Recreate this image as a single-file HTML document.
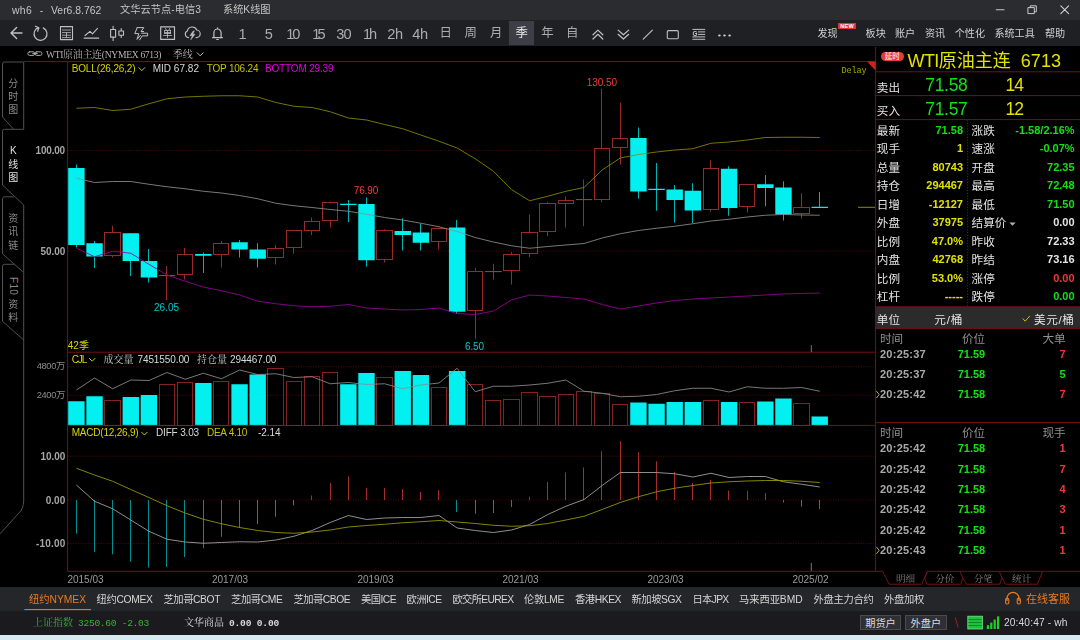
<!DOCTYPE html>
<html lang="zh"><head><meta charset="utf-8"><title>wh6 - WTI原油主连 季线</title>
<style>
html,body{margin:0;padding:0;}
body{width:1080px;height:640px;background:#000;position:relative;overflow:hidden;font-family:"Liberation Sans","Noto Sans CJK SC",sans-serif;}
.t{position:absolute;white-space:nowrap;}
.b{position:absolute;}
svg{position:absolute;left:0;top:0;}
</style></head><body>
<div class="b" style="left:0;top:0;width:1080px;height:20px;background:#2b2c2f;"></div>
<div class="b" style="left:0;top:20px;width:1080px;height:26.4px;background:#1f2024;"></div>
<div class="b" style="left:509.2px;top:21px;width:24.6px;height:23.8px;background:#3c3f47;"></div>
<div class="b" style="left:876.2px;top:307.4px;width:203.8px;height:20.8px;background:#2a2b2a;"></div>
<div class="b" style="left:0;top:586.6px;width:1080px;height:24.6px;background:#25262a;"></div>
<div class="b" style="left:0;top:611.2px;width:1080px;height:23.4px;background:#1b1b1f;"></div>
<div class="b" style="left:0;top:634.5px;width:1080px;height:6px;background:#d7eaf0;"></div>
<div class="t" style="left:880.5px;top:51.7px;width:23.5px;height:9.6px;border-radius:5px;background:#e23c3c;color:#fff;font-size:7.5px;line-height:9.8px;text-align:center;">延时</div>
<div class="t" style="left:838.4px;top:22.8px;width:17.4px;height:6.6px;background:#e03434;color:#fff;font-size:5.5px;line-height:6.8px;text-align:center;font-weight:bold;letter-spacing:0.3px;">NEW</div>
<div class="t" style="left:859.8px;top:614.6px;width:41.4px;height:15.6px;box-sizing:border-box;background:#2f3035;border:1px solid #4a4b51;color:#dcdcdc;font-size:10.2px;line-height:15px;text-align:center;">期货户</div>
<div class="t" style="left:904.6px;top:614.6px;width:42.6px;height:15.6px;box-sizing:border-box;background:#2f3035;border:1px solid #4a4b51;color:#dcdcdc;font-size:10.2px;line-height:15px;text-align:center;">外盘户</div>
<div class="t" style="left:3px;top:277px;width:20px;height:22px;font-size:10px;color:#8a8a8a;writing-mode:vertical-rl;text-orientation:sideways;line-height:20px;letter-spacing:0.3px;">F10</div>
<svg width="1080" height="640" viewBox="0 0 1080 640">
<line x1="68.00" y1="150.30" x2="875.00" y2="150.30" stroke="#4c0707" stroke-width="1" stroke-dasharray="1.2 1.3"/>
<line x1="68.00" y1="251.00" x2="875.00" y2="251.00" stroke="#4c0707" stroke-width="1" stroke-dasharray="1.2 1.3"/>
<line x1="68.00" y1="366.80" x2="875.00" y2="366.80" stroke="#4c0707" stroke-width="1" stroke-dasharray="1.2 1.3"/>
<line x1="68.00" y1="395.20" x2="875.00" y2="395.20" stroke="#4c0707" stroke-width="1" stroke-dasharray="1.2 1.3"/>
<line x1="68.00" y1="456.20" x2="875.00" y2="456.20" stroke="#4c0707" stroke-width="1" stroke-dasharray="1.2 1.3"/>
<line x1="68.00" y1="500.00" x2="875.00" y2="500.00" stroke="#4c0707" stroke-width="1" stroke-dasharray="1.2 1.3"/>
<line x1="68.00" y1="543.40" x2="875.00" y2="543.40" stroke="#4c0707" stroke-width="1" stroke-dasharray="1.2 1.3"/>
<line x1="24.00" y1="61.60" x2="875.50" y2="61.60" stroke="#761212" stroke-width="1" />
<line x1="67.60" y1="61.60" x2="67.60" y2="571.30" stroke="#761212" stroke-width="1" />
<line x1="67.60" y1="352.20" x2="875.50" y2="352.20" stroke="#761212" stroke-width="1" />
<line x1="67.60" y1="425.40" x2="875.50" y2="425.40" stroke="#761212" stroke-width="1" />
<line x1="67.60" y1="571.30" x2="882.50" y2="571.30" stroke="#761212" stroke-width="1" />
<line x1="875.60" y1="47.00" x2="875.60" y2="571.30" stroke="#761212" stroke-width="1" />
<polygon points="867,61.6 875.6,61.6 875.6,70.5" fill="#d02020"/>
<line x1="858.00" y1="207.30" x2="875.00" y2="207.30" stroke="#8c8c00" stroke-width="1" />
<line x1="811.30" y1="345.00" x2="811.30" y2="352.00" stroke="#777" stroke-width="1" />
<line x1="811.30" y1="563.00" x2="811.30" y2="571.00" stroke="#777" stroke-width="1" />
<rect x="68.20" y="401.25" width="16.4" height="23.65" fill="#02f0f0"/>
<rect x="86.33" y="396.25" width="16.4" height="28.65" fill="#02f0f0"/>
<rect x="104.50" y="400.50" width="16.00" height="25.00" fill="none" stroke="#842222" stroke-width="1"/>
<rect x="122.59" y="397.00" width="16.4" height="27.90" fill="#02f0f0"/>
<rect x="140.72" y="395.00" width="16.4" height="29.90" fill="#02f0f0"/>
<rect x="159.50" y="384.50" width="15.00" height="41.00" fill="none" stroke="#842222" stroke-width="1"/>
<rect x="177.50" y="382.50" width="15.00" height="43.00" fill="none" stroke="#842222" stroke-width="1"/>
<rect x="195.11" y="383.00" width="16.4" height="41.90" fill="#02f0f0"/>
<rect x="213.50" y="381.50" width="15.00" height="44.00" fill="none" stroke="#842222" stroke-width="1"/>
<rect x="231.37" y="384.25" width="16.4" height="40.65" fill="#02f0f0"/>
<rect x="249.50" y="374.50" width="16.4" height="50.40" fill="#02f0f0"/>
<rect x="267.50" y="368.50" width="16.00" height="57.00" fill="none" stroke="#842222" stroke-width="1"/>
<rect x="286.50" y="381.50" width="15.00" height="44.00" fill="none" stroke="#842222" stroke-width="1"/>
<rect x="304.50" y="376.50" width="15.00" height="49.00" fill="none" stroke="#842222" stroke-width="1"/>
<rect x="322.50" y="372.50" width="15.00" height="53.00" fill="none" stroke="#842222" stroke-width="1"/>
<rect x="340.15" y="384.25" width="16.4" height="40.65" fill="#02f0f0"/>
<rect x="358.28" y="373.00" width="16.4" height="51.90" fill="#02f0f0"/>
<rect x="376.50" y="377.50" width="16.00" height="48.00" fill="none" stroke="#842222" stroke-width="1"/>
<rect x="394.54" y="371.00" width="16.4" height="53.90" fill="#02f0f0"/>
<rect x="412.67" y="375.00" width="16.4" height="49.90" fill="#02f0f0"/>
<rect x="431.50" y="387.50" width="15.00" height="38.00" fill="none" stroke="#842222" stroke-width="1"/>
<rect x="448.93" y="371.00" width="16.4" height="53.90" fill="#02f0f0"/>
<rect x="467.50" y="384.50" width="15.00" height="41.00" fill="none" stroke="#842222" stroke-width="1"/>
<rect x="485.50" y="400.50" width="15.00" height="25.00" fill="none" stroke="#842222" stroke-width="1"/>
<rect x="503.50" y="399.50" width="16.00" height="26.00" fill="none" stroke="#842222" stroke-width="1"/>
<rect x="521.50" y="392.50" width="16.00" height="33.00" fill="none" stroke="#842222" stroke-width="1"/>
<rect x="539.50" y="396.50" width="16.00" height="29.00" fill="none" stroke="#842222" stroke-width="1"/>
<rect x="558.50" y="394.50" width="15.00" height="31.00" fill="none" stroke="#842222" stroke-width="1"/>
<rect x="576.50" y="391.50" width="15.00" height="34.00" fill="none" stroke="#842222" stroke-width="1"/>
<rect x="594.50" y="393.50" width="15.00" height="32.00" fill="none" stroke="#842222" stroke-width="1"/>
<rect x="612.50" y="404.50" width="15.00" height="21.00" fill="none" stroke="#842222" stroke-width="1"/>
<rect x="630.23" y="402.50" width="16.4" height="22.40" fill="#02f0f0"/>
<rect x="648.36" y="403.75" width="16.4" height="21.15" fill="#02f0f0"/>
<rect x="666.49" y="402.00" width="16.4" height="22.90" fill="#02f0f0"/>
<rect x="684.62" y="402.00" width="16.4" height="22.90" fill="#02f0f0"/>
<rect x="703.50" y="400.50" width="15.00" height="25.00" fill="none" stroke="#842222" stroke-width="1"/>
<rect x="720.88" y="402.00" width="16.4" height="22.90" fill="#02f0f0"/>
<rect x="739.50" y="402.50" width="15.00" height="23.00" fill="none" stroke="#842222" stroke-width="1"/>
<rect x="757.14" y="401.50" width="16.4" height="23.40" fill="#02f0f0"/>
<rect x="775.27" y="398.50" width="16.4" height="26.40" fill="#02f0f0"/>
<rect x="793.50" y="403.50" width="16.00" height="22.00" fill="none" stroke="#842222" stroke-width="1"/>
<rect x="811.53" y="416.50" width="16.4" height="8.40" fill="#02f0f0"/>
<polyline points="76.40,390.00 94.53,378.00 112.66,388.75 130.79,380.00 148.92,380.50 167.05,372.50 185.18,379.25 203.31,373.25 221.44,378.75 239.57,370.00 257.70,374.50 275.83,373.75 293.96,377.50 312.09,376.75 330.22,383.75 348.35,382.50 366.48,384.50 384.61,383.75 402.74,388.75 420.87,385.00 439.00,383.00 457.13,368.25 475.26,391.75 493.39,386.25 511.52,386.25 529.65,385.00 547.78,383.25 565.91,380.00 584.04,391.25 602.17,393.25 620.30,396.75 638.43,396.25 656.56,394.50 674.69,390.75 692.82,388.25 710.95,388.25 729.08,392.00 747.21,386.75 765.34,388.25 783.47,388.25 801.60,387.50 819.73,391.25" fill="none" stroke="#8c8c8c" stroke-width="0.85" stroke-linejoin="round"/>
<line x1="76.50" y1="164.50" x2="76.50" y2="247.50" stroke="#00b4b4" stroke-width="1" />
<rect x="68.20" y="168.00" width="16.4" height="77.00" fill="#02f0f0"/>
<line x1="94.50" y1="241.00" x2="94.50" y2="268.00" stroke="#00b4b4" stroke-width="1" />
<rect x="86.33" y="243.25" width="16.4" height="13.25" fill="#02f0f0"/>
<line x1="112.50" y1="225.75" x2="112.50" y2="232.50" stroke="#9a2a28" stroke-width="1" />
<line x1="112.50" y1="255.50" x2="112.50" y2="257.50" stroke="#9a2a28" stroke-width="1" />
<rect x="104.50" y="232.50" width="16.00" height="23.00" fill="none" stroke="#9a2a28" stroke-width="1"/>
<line x1="130.50" y1="233.25" x2="130.50" y2="276.00" stroke="#00b4b4" stroke-width="1" />
<rect x="122.59" y="233.25" width="16.4" height="27.75" fill="#02f0f0"/>
<line x1="148.50" y1="249.00" x2="148.50" y2="282.50" stroke="#00b4b4" stroke-width="1" />
<rect x="140.72" y="261.00" width="16.4" height="16.50" fill="#02f0f0"/>
<line x1="166.50" y1="266.00" x2="166.50" y2="300.00" stroke="#9a2a28" stroke-width="1" />
<rect x="158.85" y="275.00" width="16.4" height="1.1" fill="#c03030"/>
<line x1="184.50" y1="248.00" x2="184.50" y2="254.50" stroke="#9a2a28" stroke-width="1" />
<line x1="184.50" y1="274.50" x2="184.50" y2="279.50" stroke="#9a2a28" stroke-width="1" />
<rect x="177.50" y="254.50" width="15.00" height="20.00" fill="none" stroke="#9a2a28" stroke-width="1"/>
<line x1="203.50" y1="252.50" x2="203.50" y2="273.00" stroke="#00b4b4" stroke-width="1" />
<rect x="195.11" y="254.00" width="16.4" height="1.75" fill="#02f0f0"/>
<line x1="221.50" y1="241.00" x2="221.50" y2="243.50" stroke="#9a2a28" stroke-width="1" />
<line x1="221.50" y1="254.50" x2="221.50" y2="267.50" stroke="#9a2a28" stroke-width="1" />
<rect x="213.50" y="243.50" width="15.00" height="11.00" fill="none" stroke="#9a2a28" stroke-width="1"/>
<line x1="239.50" y1="240.00" x2="239.50" y2="257.50" stroke="#00b4b4" stroke-width="1" />
<rect x="231.37" y="242.25" width="16.4" height="7.25" fill="#02f0f0"/>
<line x1="257.50" y1="243.25" x2="257.50" y2="267.50" stroke="#00b4b4" stroke-width="1" />
<rect x="249.50" y="249.50" width="16.4" height="9.25" fill="#02f0f0"/>
<line x1="275.50" y1="245.00" x2="275.50" y2="248.50" stroke="#9a2a28" stroke-width="1" />
<line x1="275.50" y1="257.50" x2="275.50" y2="264.50" stroke="#9a2a28" stroke-width="1" />
<rect x="267.50" y="248.50" width="16.00" height="9.00" fill="none" stroke="#9a2a28" stroke-width="1"/>
<line x1="293.50" y1="230.00" x2="293.50" y2="230.50" stroke="#9a2a28" stroke-width="1" />
<line x1="293.50" y1="247.50" x2="293.50" y2="253.75" stroke="#9a2a28" stroke-width="1" />
<rect x="286.50" y="230.50" width="15.00" height="17.00" fill="none" stroke="#9a2a28" stroke-width="1"/>
<line x1="311.50" y1="217.50" x2="311.50" y2="221.50" stroke="#9a2a28" stroke-width="1" />
<line x1="311.50" y1="230.50" x2="311.50" y2="235.00" stroke="#9a2a28" stroke-width="1" />
<rect x="304.50" y="221.50" width="15.00" height="9.00" fill="none" stroke="#9a2a28" stroke-width="1"/>
<line x1="330.50" y1="201.50" x2="330.50" y2="202.50" stroke="#9a2a28" stroke-width="1" />
<line x1="330.50" y1="220.50" x2="330.50" y2="227.50" stroke="#9a2a28" stroke-width="1" />
<rect x="322.50" y="202.50" width="15.00" height="18.00" fill="none" stroke="#9a2a28" stroke-width="1"/>
<line x1="348.50" y1="200.00" x2="348.50" y2="222.00" stroke="#00b4b4" stroke-width="1" />
<rect x="340.15" y="203.75" width="16.4" height="1.20" fill="#02f0f0"/>
<line x1="366.50" y1="197.50" x2="366.50" y2="266.75" stroke="#00b4b4" stroke-width="1" />
<rect x="358.28" y="204.00" width="16.4" height="56.25" fill="#02f0f0"/>
<line x1="384.50" y1="229.25" x2="384.50" y2="230.50" stroke="#9a2a28" stroke-width="1" />
<line x1="384.50" y1="259.50" x2="384.50" y2="262.50" stroke="#9a2a28" stroke-width="1" />
<rect x="376.50" y="230.50" width="16.00" height="29.00" fill="none" stroke="#9a2a28" stroke-width="1"/>
<line x1="402.50" y1="218.25" x2="402.50" y2="250.50" stroke="#00b4b4" stroke-width="1" />
<rect x="394.54" y="231.00" width="16.4" height="4.00" fill="#02f0f0"/>
<line x1="420.50" y1="223.75" x2="420.50" y2="250.50" stroke="#00b4b4" stroke-width="1" />
<rect x="412.67" y="232.50" width="16.4" height="10.25" fill="#02f0f0"/>
<line x1="438.50" y1="227.50" x2="438.50" y2="228.50" stroke="#9a2a28" stroke-width="1" />
<line x1="438.50" y1="241.50" x2="438.50" y2="249.50" stroke="#9a2a28" stroke-width="1" />
<rect x="431.50" y="228.50" width="15.00" height="13.00" fill="none" stroke="#9a2a28" stroke-width="1"/>
<line x1="456.50" y1="220.00" x2="456.50" y2="313.75" stroke="#00b4b4" stroke-width="1" />
<rect x="448.93" y="227.50" width="16.4" height="84.25" fill="#02f0f0"/>
<line x1="475.50" y1="268.00" x2="475.50" y2="271.50" stroke="#9a2a28" stroke-width="1" />
<line x1="475.50" y1="310.50" x2="475.50" y2="338.75" stroke="#9a2a28" stroke-width="1" />
<rect x="467.50" y="271.50" width="15.00" height="39.00" fill="none" stroke="#9a2a28" stroke-width="1"/>
<line x1="493.50" y1="263.75" x2="493.50" y2="279.50" stroke="#9a2a28" stroke-width="1" />
<rect x="485.19" y="271.00" width="16.4" height="1.1" fill="#c03030"/>
<line x1="511.50" y1="252.00" x2="511.50" y2="254.50" stroke="#9a2a28" stroke-width="1" />
<line x1="511.50" y1="270.50" x2="511.50" y2="284.50" stroke="#9a2a28" stroke-width="1" />
<rect x="503.50" y="254.50" width="16.00" height="16.00" fill="none" stroke="#9a2a28" stroke-width="1"/>
<line x1="529.50" y1="214.50" x2="529.50" y2="232.50" stroke="#9a2a28" stroke-width="1" />
<line x1="529.50" y1="253.50" x2="529.50" y2="257.00" stroke="#9a2a28" stroke-width="1" />
<rect x="521.50" y="232.50" width="16.00" height="21.00" fill="none" stroke="#9a2a28" stroke-width="1"/>
<line x1="547.50" y1="202.00" x2="547.50" y2="203.50" stroke="#9a2a28" stroke-width="1" />
<line x1="547.50" y1="231.50" x2="547.50" y2="236.25" stroke="#9a2a28" stroke-width="1" />
<rect x="539.50" y="203.50" width="16.00" height="28.00" fill="none" stroke="#9a2a28" stroke-width="1"/>
<line x1="565.50" y1="196.50" x2="565.50" y2="200.50" stroke="#9a2a28" stroke-width="1" />
<line x1="565.50" y1="203.50" x2="565.50" y2="227.50" stroke="#9a2a28" stroke-width="1" />
<rect x="558.50" y="200.50" width="15.00" height="3.00" fill="none" stroke="#9a2a28" stroke-width="1"/>
<line x1="583.50" y1="179.50" x2="583.50" y2="226.25" stroke="#9a2a28" stroke-width="1" />
<rect x="575.84" y="199.00" width="16.4" height="1.1" fill="#c03030"/>
<line x1="601.50" y1="88.75" x2="601.50" y2="148.50" stroke="#9a2a28" stroke-width="1" />
<line x1="601.50" y1="199.50" x2="601.50" y2="202.00" stroke="#9a2a28" stroke-width="1" />
<rect x="594.50" y="148.50" width="15.00" height="51.00" fill="none" stroke="#9a2a28" stroke-width="1"/>
<line x1="620.50" y1="102.50" x2="620.50" y2="138.50" stroke="#9a2a28" stroke-width="1" />
<line x1="620.50" y1="147.50" x2="620.50" y2="164.50" stroke="#9a2a28" stroke-width="1" />
<rect x="612.50" y="138.50" width="15.00" height="9.00" fill="none" stroke="#9a2a28" stroke-width="1"/>
<line x1="638.50" y1="127.50" x2="638.50" y2="198.75" stroke="#00b4b4" stroke-width="1" />
<rect x="630.23" y="138.00" width="16.4" height="53.50" fill="#02f0f0"/>
<line x1="656.50" y1="163.00" x2="656.50" y2="210.75" stroke="#00b4b4" stroke-width="1" />
<rect x="648.36" y="188.75" width="16.4" height="1.25" fill="#02f0f0"/>
<line x1="674.50" y1="185.00" x2="674.50" y2="222.50" stroke="#00b4b4" stroke-width="1" />
<rect x="666.49" y="189.50" width="16.4" height="10.50" fill="#02f0f0"/>
<line x1="692.50" y1="183.25" x2="692.50" y2="223.00" stroke="#00b4b4" stroke-width="1" />
<rect x="684.62" y="190.75" width="16.4" height="19.75" fill="#02f0f0"/>
<line x1="710.50" y1="160.50" x2="710.50" y2="168.50" stroke="#9a2a28" stroke-width="1" />
<line x1="710.50" y1="209.50" x2="710.50" y2="211.50" stroke="#9a2a28" stroke-width="1" />
<rect x="703.50" y="168.50" width="15.00" height="41.00" fill="none" stroke="#9a2a28" stroke-width="1"/>
<line x1="728.50" y1="166.25" x2="728.50" y2="215.75" stroke="#00b4b4" stroke-width="1" />
<rect x="720.88" y="168.75" width="16.4" height="39.25" fill="#02f0f0"/>
<line x1="747.50" y1="184.00" x2="747.50" y2="184.50" stroke="#9a2a28" stroke-width="1" />
<line x1="747.50" y1="206.50" x2="747.50" y2="212.50" stroke="#9a2a28" stroke-width="1" />
<rect x="739.50" y="184.50" width="15.00" height="22.00" fill="none" stroke="#9a2a28" stroke-width="1"/>
<line x1="765.50" y1="175.00" x2="765.50" y2="206.25" stroke="#00b4b4" stroke-width="1" />
<rect x="757.14" y="184.25" width="16.4" height="3.75" fill="#02f0f0"/>
<line x1="783.50" y1="181.25" x2="783.50" y2="220.50" stroke="#00b4b4" stroke-width="1" />
<rect x="775.27" y="187.50" width="16.4" height="27.00" fill="#02f0f0"/>
<line x1="801.50" y1="193.25" x2="801.50" y2="207.50" stroke="#9a2a28" stroke-width="1" />
<line x1="801.50" y1="213.50" x2="801.50" y2="218.50" stroke="#9a2a28" stroke-width="1" />
<rect x="793.50" y="207.50" width="16.00" height="6.00" fill="none" stroke="#9a2a28" stroke-width="1"/>
<line x1="819.50" y1="192.00" x2="819.50" y2="208.00" stroke="#00b4b4" stroke-width="1" />
<rect x="811.53" y="206.75" width="16.4" height="1.25" fill="#02f0f0"/>
<polyline points="76.40,108.25 94.53,107.50 112.66,110.50 130.79,109.25 148.92,103.75 167.05,98.75 185.18,97.00 203.31,96.25 221.44,95.75 239.57,95.75 257.70,97.00 275.83,102.50 293.96,106.25 312.09,107.50 330.22,111.75 348.35,118.00 366.48,120.00 384.61,124.50 402.74,128.75 420.87,135.00 439.00,141.25 457.13,148.00 475.26,158.75 493.39,171.25 511.52,189.50 529.65,200.75 547.78,196.25 565.91,191.25 584.04,187.50 602.17,170.00 620.30,158.00 638.43,154.50 656.56,152.00 674.69,150.00 692.82,148.75 710.95,143.25 729.08,142.00 747.21,140.00 765.34,137.50 783.47,137.25 801.60,137.25 819.73,137.50" fill="none" stroke="#8a8a00" stroke-width="0.85" stroke-linejoin="round"/>
<polyline points="76.40,178.25 94.53,182.50 112.66,181.50 130.79,181.50 148.92,184.25 167.05,186.75 185.18,188.75 203.31,191.25 221.44,193.00 239.57,195.50 257.70,198.75 275.83,203.25 293.96,205.75 312.09,207.50 330.22,209.50 348.35,211.25 366.48,214.25 384.61,217.50 402.74,220.00 420.87,223.25 439.00,226.75 457.13,231.50 475.26,237.50 493.39,242.00 511.52,245.75 529.65,248.25 547.78,246.50 565.91,245.00 584.04,243.50 602.17,238.00 620.30,233.75 638.43,230.50 656.56,228.25 674.69,226.25 692.82,223.75 710.95,221.00 729.08,219.25 747.21,217.00 765.34,215.25 783.47,214.50 801.60,215.00 819.73,215.25" fill="none" stroke="#8e8e8e" stroke-width="0.85" stroke-linejoin="round"/>
<polyline points="76.40,248.00 94.53,256.75 112.66,251.25 130.79,253.25 148.92,264.25 167.05,275.00 185.18,281.25 203.31,287.00 221.44,290.75 239.57,295.00 257.70,301.25 275.83,303.75 293.96,305.75 312.09,306.75 330.22,306.25 348.35,304.50 366.48,308.00 384.61,309.00 402.74,310.00 420.87,309.50 439.00,308.00 457.13,313.50 475.26,314.50 493.39,311.00 511.52,300.00 529.65,295.00 547.78,296.00 565.91,297.50 584.04,299.00 602.17,304.50 620.30,309.00 638.43,306.00 656.56,303.00 674.69,300.50 692.82,299.00 710.95,298.00 729.08,297.00 747.21,296.00 765.34,295.00 783.47,294.00 801.60,293.50 819.73,293.00" fill="none" stroke="#98009a" stroke-width="0.85" stroke-linejoin="round"/>
<line x1="76.50" y1="500.00" x2="76.50" y2="533.75" stroke="#008e8e" stroke-width="1" />
<line x1="94.50" y1="500.00" x2="94.50" y2="552.00" stroke="#008e8e" stroke-width="1" />
<line x1="112.50" y1="500.00" x2="112.50" y2="554.25" stroke="#008e8e" stroke-width="1" />
<line x1="130.50" y1="500.00" x2="130.50" y2="561.75" stroke="#008e8e" stroke-width="1" />
<line x1="148.50" y1="500.00" x2="148.50" y2="567.50" stroke="#008e8e" stroke-width="1" />
<line x1="166.50" y1="500.00" x2="166.50" y2="567.00" stroke="#008e8e" stroke-width="1" />
<line x1="184.50" y1="500.00" x2="184.50" y2="557.00" stroke="#008e8e" stroke-width="1" />
<line x1="203.50" y1="500.00" x2="203.50" y2="548.25" stroke="#008e8e" stroke-width="1" />
<line x1="221.50" y1="500.00" x2="221.50" y2="536.75" stroke="#008e8e" stroke-width="1" />
<line x1="239.50" y1="500.00" x2="239.50" y2="528.00" stroke="#008e8e" stroke-width="1" />
<line x1="257.50" y1="500.00" x2="257.50" y2="524.25" stroke="#008e8e" stroke-width="1" />
<line x1="275.50" y1="500.00" x2="275.50" y2="516.75" stroke="#008e8e" stroke-width="1" />
<line x1="293.50" y1="500.00" x2="293.50" y2="505.50" stroke="#008e8e" stroke-width="1" />
<line x1="311.50" y1="500.00" x2="311.50" y2="495.50" stroke="#a82c2c" stroke-width="1" />
<line x1="330.50" y1="500.00" x2="330.50" y2="483.25" stroke="#a82c2c" stroke-width="1" />
<line x1="348.50" y1="500.00" x2="348.50" y2="476.50" stroke="#a82c2c" stroke-width="1" />
<line x1="366.50" y1="500.00" x2="366.50" y2="488.25" stroke="#a82c2c" stroke-width="1" />
<line x1="384.50" y1="500.00" x2="384.50" y2="488.00" stroke="#a82c2c" stroke-width="1" />
<line x1="402.50" y1="500.00" x2="402.50" y2="489.00" stroke="#a82c2c" stroke-width="1" />
<line x1="420.50" y1="500.00" x2="420.50" y2="492.00" stroke="#a82c2c" stroke-width="1" />
<line x1="438.50" y1="500.00" x2="438.50" y2="490.00" stroke="#a82c2c" stroke-width="1" />
<line x1="456.50" y1="500.00" x2="456.50" y2="512.00" stroke="#008e8e" stroke-width="1" />
<line x1="475.50" y1="500.00" x2="475.50" y2="513.75" stroke="#008e8e" stroke-width="1" />
<line x1="493.50" y1="500.00" x2="493.50" y2="513.00" stroke="#008e8e" stroke-width="1" />
<line x1="511.50" y1="500.00" x2="511.50" y2="507.00" stroke="#008e8e" stroke-width="1" />
<line x1="529.50" y1="500.00" x2="529.50" y2="496.75" stroke="#a82c2c" stroke-width="1" />
<line x1="547.50" y1="500.00" x2="547.50" y2="482.00" stroke="#a82c2c" stroke-width="1" />
<line x1="565.50" y1="500.00" x2="565.50" y2="472.50" stroke="#a82c2c" stroke-width="1" />
<line x1="583.50" y1="500.00" x2="583.50" y2="467.50" stroke="#a82c2c" stroke-width="1" />
<line x1="601.50" y1="500.00" x2="601.50" y2="451.25" stroke="#a82c2c" stroke-width="1" />
<line x1="620.50" y1="500.00" x2="620.50" y2="441.25" stroke="#a82c2c" stroke-width="1" />
<line x1="638.50" y1="500.00" x2="638.50" y2="452.00" stroke="#a82c2c" stroke-width="1" />
<line x1="656.50" y1="500.00" x2="656.50" y2="461.25" stroke="#a82c2c" stroke-width="1" />
<line x1="674.50" y1="500.00" x2="674.50" y2="472.00" stroke="#a82c2c" stroke-width="1" />
<line x1="692.50" y1="500.00" x2="692.50" y2="483.00" stroke="#a82c2c" stroke-width="1" />
<line x1="710.50" y1="500.00" x2="710.50" y2="480.00" stroke="#a82c2c" stroke-width="1" />
<line x1="728.50" y1="500.00" x2="728.50" y2="490.50" stroke="#a82c2c" stroke-width="1" />
<line x1="747.50" y1="500.00" x2="747.50" y2="490.75" stroke="#a82c2c" stroke-width="1" />
<line x1="765.50" y1="500.00" x2="765.50" y2="493.00" stroke="#a82c2c" stroke-width="1" />
<line x1="783.50" y1="500.00" x2="783.50" y2="502.50" stroke="#008e8e" stroke-width="1" />
<line x1="801.50" y1="500.00" x2="801.50" y2="506.75" stroke="#008e8e" stroke-width="1" />
<line x1="819.50" y1="500.00" x2="819.50" y2="509.00" stroke="#008e8e" stroke-width="1" />
<polyline points="76.40,485.00 94.53,501.25 112.66,508.75 130.79,520.00 148.92,531.25 167.05,539.25 185.18,542.00 203.31,543.25 221.44,542.50 239.57,541.75 257.70,542.00 275.83,540.00 293.96,536.25 312.09,530.50 330.22,522.50 348.35,515.50 366.48,519.50 384.61,518.00 402.74,517.50 420.87,517.50 439.00,515.50 457.13,528.00 475.26,530.50 493.39,532.50 511.52,530.00 529.65,524.50 547.78,514.50 565.91,506.25 584.04,499.50 602.17,485.50 620.30,472.50 638.43,472.50 656.56,472.50 674.69,473.75 692.82,477.00 710.95,473.25 729.08,477.50 747.21,476.50 765.34,476.50 783.47,481.75 801.60,484.25 819.73,487.00" fill="none" stroke="#a8a8a8" stroke-width="0.85" stroke-linejoin="round"/>
<polyline points="76.40,468.25 94.53,475.00 112.66,481.25 130.79,489.50 148.92,497.50 167.05,505.75 185.18,513.00 203.31,519.25 221.44,523.75 239.57,527.50 257.70,530.50 275.83,532.50 293.96,533.25 312.09,532.00 330.22,530.00 348.35,527.00 366.48,525.50 384.61,524.25 402.74,522.75 420.87,521.75 439.00,520.50 457.13,522.00 475.26,523.50 493.39,525.25 511.52,526.25 529.65,525.75 547.78,523.50 565.91,520.00 584.04,516.25 602.17,509.50 620.30,502.50 638.43,496.75 656.56,491.75 674.69,488.25 692.82,485.50 710.95,483.00 729.08,481.75 747.21,481.00 765.34,480.50 783.47,480.50 801.60,481.25 819.73,482.50" fill="none" stroke="#9c9c00" stroke-width="0.85" stroke-linejoin="round"/>
<path d="M23.7,129.3 L23.7,62 L4.5,62 Q2.5,62 2.5,64 L2.5,117 L13.7,129.3 L23.7,129.3" fill="none" stroke="#505050" stroke-width="1" stroke-linejoin="round"/>
<path d="M13.7,129.3 L4.5,129.3 Q2.5,129.3 2.5,131.3 L2.5,185 L23.7,205" fill="none" stroke="#505050" stroke-width="1" stroke-linejoin="round"/>
<path d="M13.7,196.8 L4.5,196.8 Q2.5,196.8 2.5,198.8 L2.5,253.8 L23.7,272.5 L23.7,205" fill="none" stroke="#505050" stroke-width="1" stroke-linejoin="round"/>
<path d="M13.7,264.3 L4.5,264.3 Q2.5,264.3 2.5,266.3 L2.5,321.3 L23.7,340 L23.7,272.5" fill="none" stroke="#505050" stroke-width="1" stroke-linejoin="round"/>
<path d="M23.7,340 L23.7,501 Q23.7,508.5 18.5,513.5 L0,533.8" fill="none" stroke="#505050" stroke-width="1" stroke-linejoin="round"/>
<line x1="875.60" y1="71.80" x2="1080.00" y2="71.80" stroke="#761212" stroke-width="1" />
<line x1="875.60" y1="95.60" x2="1080.00" y2="95.60" stroke="#761212" stroke-width="1" />
<line x1="875.60" y1="119.60" x2="1080.00" y2="119.60" stroke="#761212" stroke-width="1" />
<line x1="875.60" y1="306.80" x2="1080.00" y2="306.80" stroke="#761212" stroke-width="1" />
<line x1="875.60" y1="328.60" x2="1080.00" y2="328.60" stroke="#761212" stroke-width="1" />
<line x1="875.60" y1="422.60" x2="1080.00" y2="422.60" stroke="#761212" stroke-width="1" />
<line x1="967.60" y1="120.00" x2="967.60" y2="306.80" stroke="#7a1414" stroke-width="1" stroke-dasharray="1.2 1.6"/>
<path d="M882.5,571.3 L889.2,584.2 L921.7,584.2 L927.5,571.3 L1080,571.3" fill="none" stroke="#761212" stroke-width="1" stroke-linejoin="round"/>
<path d="M927.5,571.3 L924.8,577.8 L926.8,584.2 L960.8,584.2 L962.8,577.8 L960,571.3" fill="none" stroke="#761212" stroke-width="1" stroke-linejoin="round"/>
<path d="M962.8,577.8 L966.3,584.2 L999.7,584.2 L1002,577.8 L999.2,571.3" fill="none" stroke="#761212" stroke-width="1" stroke-linejoin="round"/>
<path d="M1002,577.8 L1005.3,584.2 L1037.5,584.2 L1042.5,571.3" fill="none" stroke="#761212" stroke-width="1" stroke-linejoin="round"/>
<path d="M996.3,9.7 L1004,9.7" fill="none" stroke="#c8c8c8" stroke-width="1.1" stroke-linecap="round" stroke-linejoin="round" />
<path d="M1028.3,7.6 h6 v6 h-6 z M1030.3,7.6 v-1.8 h6 v6 h-1.8" fill="none" stroke="#c8c8c8" stroke-width="1" stroke-linecap="round" stroke-linejoin="round" />
<path d="M1060.8,5.9 l7.8,7.8 M1068.6,5.9 l-7.8,7.8" fill="none" stroke="#d0d0d0" stroke-width="1.1" stroke-linecap="round" stroke-linejoin="round" />
<path d="M11,33 L22,33 M16.6,27.4 L11,33 L16.6,38.6" fill="none" stroke="#c0c0c0" stroke-width="1.4" stroke-linecap="round" stroke-linejoin="round" />
<path d="M38.6,27.6 A6.5,6.5 0 1 0 43.2,27.9 M35.4,26.2 L38.9,27.7 L37.6,31.2" fill="none" stroke="#c0c0c0" stroke-width="1.2" stroke-linecap="round" stroke-linejoin="round" />
<path d="M60.5,26.6 h12 v13 h-12 z" fill="none" stroke="#c0c0c0" stroke-width="1.1" stroke-linecap="round" stroke-linejoin="round" />
<path d="M62.4,30 h8.2 M62.4,32.6 h8.2 M62.4,35.2 h8.2 M62.4,37.6 h8.2 M66.5,32.6 v5" fill="none" stroke="#c0c0c0" stroke-width="0.8" stroke-linecap="round" stroke-linejoin="round" />
<path d="M85,35.5 L90,31.4 L92.5,33.8 L97.5,28.4" fill="none" stroke="#c0c0c0" stroke-width="1.1" stroke-linecap="round" stroke-linejoin="round" />
<path d="M84.2,38.2 L98.6,38.2" fill="none" stroke="#c0c0c0" stroke-width="1.3" stroke-linecap="round" stroke-linejoin="round" />
<path d="M110.6,29.5 h5 v7.6 h-5 z M113.1,26.2 v3.3 M113.1,37.1 v3.4" fill="none" stroke="#c0c0c0" stroke-width="1.1" stroke-linecap="round" stroke-linejoin="round" />
<path d="M118.9,31 h4.6 v4.2 h-4.6 z M121.2,28.6 v2.4 M121.2,35.2 v2.2" fill="none" stroke="#c0c0c0" stroke-width="1.1" stroke-linecap="round" stroke-linejoin="round" />
<path d="M137.2,27.6 h6.6 l-2.8,3.9 h2.6 M137.2,27.6 l-2.4,6 h4 l-1.8,5.8 l3.4,-4" fill="none" stroke="#c0c0c0" stroke-width="1" stroke-linecap="round" stroke-linejoin="round" />
<path d="M141.6,33.2 h6 v2.7 h-5.4 l-2.6,4" fill="none" stroke="#c0c0c0" stroke-width="1" stroke-linecap="round" stroke-linejoin="round" />
<path d="M160.7,26.8 h13.8 v12.6 h-13.8 z" fill="none" stroke="#c0c0c0" stroke-width="1.2" stroke-linecap="round" stroke-linejoin="round" />
<path d="M188.6,37.6 a3.5,3.5 0 0 1 -1.2,-6.7 a4.9,4.9 0 0 1 9.3,-0.9 a3.8,3.8 0 0 1 -0.6,7.6" fill="none" stroke="#c0c0c0" stroke-width="1.1" stroke-linecap="round" stroke-linejoin="round" />
<path d="M193,31.2 l-3,4.4 h2.3 l-1.5,4.2 l4.2,-5.6 h-2.3 l1.6,-3 z" fill="#c0c0c0" stroke="#c0c0c0" stroke-width="0.5" stroke-linecap="round" stroke-linejoin="round" />
<path d="M212.6,37.7 h9.8 M213.9,37.5 v-4.6 a3.6,3.9 0 0 1 7.2,0 v4.6 M216.7,39.5 h1.6 M217.5,28.6 v-0.8" fill="none" stroke="#c0c0c0" stroke-width="1.2" stroke-linecap="round" stroke-linejoin="round" />
<path d="M593,34.8 L597.9,30.1 L602.8,34.8 M593,39 L597.9,34.3 L602.8,39" fill="none" stroke="#c0c0c0" stroke-width="1.2" stroke-linecap="round" stroke-linejoin="round" />
<path d="M618.1,30.1 L623.4,34.8 L628.7,30.1 M618.1,34.3 L623.4,39 L628.7,34.3" fill="none" stroke="#c0c0c0" stroke-width="1.2" stroke-linecap="round" stroke-linejoin="round" />
<path d="M643.2,39.2 L652.4,30.1" fill="none" stroke="#c0c0c0" stroke-width="1.1" stroke-linecap="round" stroke-linejoin="round" />
<path d="M668.4,30.6 h8.8 a1.1,1.1 0 0 1 1.1,1.1 v6 a1.1,1.1 0 0 1 -1.1,1.1 h-8.8 a1.1,1.1 0 0 1 -1.1,-1.1 v-6 a1.1,1.1 0 0 1 1.1,-1.1 z" fill="none" stroke="#c0c0c0" stroke-width="1.1" stroke-linecap="round" stroke-linejoin="round" />
<path d="M692.8,29.4 h12 M698.4,31.9 h6.4 M698.4,34.4 h6.4 M692.8,36.9 h12 M692.8,39.3 h12" fill="none" stroke="#c0c0c0" stroke-width="1" stroke-linecap="round" stroke-linejoin="round" />
<ellipse cx="719.4" cy="35.5" rx="1.3" ry="1" fill="#d0d0d0"/>
<ellipse cx="724.5" cy="35.5" rx="1.3" ry="1" fill="#d0d0d0"/>
<ellipse cx="729.6" cy="35.5" rx="1.3" ry="1" fill="#d0d0d0"/>
<path d="M197.2,52.8 l3,3 l3,-3" fill="none" stroke="#c0c0c0" stroke-width="1" stroke-linecap="round" stroke-linejoin="round" />
<path d="M138.8,67.6 l3,3 l3,-3" fill="none" stroke="#c8c800" stroke-width="1" stroke-linecap="round" stroke-linejoin="round" />
<path d="M89.4,358.4 l2.8,2.8 l2.8,-2.8" fill="none" stroke="#c8c800" stroke-width="1" stroke-linecap="round" stroke-linejoin="round" />
<path d="M141.6,432.2 l2.8,2.8 l2.8,-2.8" fill="none" stroke="#c8c800" stroke-width="1" stroke-linecap="round" stroke-linejoin="round" />
<path d="M29.6,51.8 h3.4 a1.8,1.8 0 0 1 0,3.6 h-3.4 a1.8,1.8 0 0 1 0,-3.6 z M36.8,51.8 h3.4 a1.8,1.8 0 0 1 0,3.6 h-3.4 a1.8,1.8 0 0 1 0,-3.6 z M32.6,53.6 h4.8" fill="none" stroke="#a8a8a8" stroke-width="1" stroke-linecap="round" stroke-linejoin="round" />
<path d="M876.6,391.4 l2.6,3.2 l-2.6,3.2" fill="none" stroke="#c8c800" stroke-width="0.9" stroke-linecap="round" stroke-linejoin="round" />
<path d="M876.6,547.2 l2.6,3.2 l-2.6,3.2" fill="none" stroke="#c8c800" stroke-width="0.9" stroke-linecap="round" stroke-linejoin="round" />
<path d="M1023,318.8 l2.2,2.4 l4.4,-5" fill="none" stroke="#d0c000" stroke-width="1" stroke-linecap="round" stroke-linejoin="round" />
<polygon points="1009.4,222.6 1015.6,222.6 1012.5,225.8" fill="#b0b0b0"/>
<path d="M1007,601 v-2.6 a6,6 0 0 1 12,0 v2.6" fill="none" stroke="#ee7a1c" stroke-width="1.3"/><rect x="1005.6" y="598.4" width="3.2" height="5.6" rx="1.4" fill="none" stroke="#ee7a1c" stroke-width="1.1"/><rect x="1017.2" y="598.4" width="3.2" height="5.6" rx="1.4" fill="none" stroke="#ee7a1c" stroke-width="1.1"/>
<path d="M955.2,617.4 L958.2,627.6" stroke="#a02020" stroke-width="1" fill="none"/>
<rect x="967.8" y="616.2" width="14.6" height="12.8" fill="#1cc23c" stroke="#7adf8c" stroke-width="0.8"/><path d="M968.5,619.5 h13 M968.5,622.5 h13 M968.5,625.5 h13" stroke="#0a7a22" stroke-width="0.8"/>
<rect x="986.8" y="625.2" width="2.2" height="3.8" fill="#22d022"/><rect x="990.2" y="622.6" width="2.2" height="6.4" fill="#22d022"/><rect x="993.6" y="619.6" width="2.2" height="9.4" fill="#22d022"/><rect x="997" y="616.4" width="2.2" height="12.6" fill="#22d022"/>
<rect x="24.4" y="609" width="66.6" height="1.1" fill="#e47418"/>
</svg>
<div style="position:absolute;left:0;top:0;width:1080px;height:640px;will-change:transform;">

<div class="t" style="top:2.80px;height:15px;line-height:15px;font-size:10.4px;color:#c4c4c4;letter-spacing:0.312px;left:12.00px;">wh6</div>
<div class="t" style="top:2.80px;height:15px;line-height:15px;font-size:10.4px;color:#c4c4c4;left:39.80px;">-</div>
<div class="t" style="top:2.80px;height:15px;line-height:15px;font-size:10.4px;color:#c4c4c4;letter-spacing:0.003px;left:51.00px;">Ver6.8.762</div>
<div class="t" style="top:3.30px;height:14px;line-height:14px;font-size:10.2px;color:#c4c4c4;letter-spacing:0.069px;left:120.00px;">文华云节点-电信3</div>
<div class="t" style="top:3.30px;height:14px;line-height:14px;font-size:10.2px;color:#c4c4c4;letter-spacing:-0.009px;left:223.00px;">系统K线图</div>
<div class="t" style="top:24.20px;height:20px;line-height:20px;font-size:14.6px;color:#acacac;left:92.60px;width:300px;text-align:center;">1</div>
<div class="t" style="top:24.20px;height:20px;line-height:20px;font-size:14.6px;color:#acacac;letter-spacing:-0.925px;left:118.44px;width:300px;text-align:center;">5</div>
<div class="t" style="top:24.20px;height:20px;line-height:20px;font-size:14.6px;color:#acacac;letter-spacing:-2.117px;left:142.34px;width:300px;text-align:center;">10</div>
<div class="t" style="top:24.20px;height:20px;line-height:20px;font-size:14.6px;color:#acacac;letter-spacing:-2.867px;left:167.57px;width:300px;text-align:center;">15</div>
<div class="t" style="top:24.20px;height:20px;line-height:20px;font-size:14.6px;color:#acacac;letter-spacing:-0.817px;left:193.59px;width:300px;text-align:center;">30</div>
<div class="t" style="top:24.20px;height:20px;line-height:20px;font-size:14.6px;color:#acacac;letter-spacing:-2.117px;left:218.94px;width:300px;text-align:center;">1h</div>
<div class="t" style="top:24.20px;height:20px;line-height:20px;font-size:14.6px;color:#acacac;letter-spacing:-0.367px;left:245.02px;width:300px;text-align:center;">2h</div>
<div class="t" style="top:24.20px;height:20px;line-height:20px;font-size:14.6px;color:#acacac;letter-spacing:-0.367px;left:270.12px;width:300px;text-align:center;">4h</div>
<div class="t" style="top:25.40px;height:17px;line-height:17px;font-size:12.4px;color:#acacac;left:295.70px;width:300px;text-align:center;">日</div>
<div class="t" style="top:25.40px;height:17px;line-height:17px;font-size:12.4px;color:#acacac;left:320.70px;width:300px;text-align:center;">周</div>
<div class="t" style="top:25.40px;height:17px;line-height:17px;font-size:12.4px;color:#acacac;left:346.20px;width:300px;text-align:center;">月</div>
<div class="t" style="top:25.40px;height:17px;line-height:17px;font-size:12.4px;color:#e8e8e8;left:371.70px;width:300px;text-align:center;">季</div>
<div class="t" style="top:25.40px;height:17px;line-height:17px;font-size:12.4px;color:#acacac;left:397.40px;width:300px;text-align:center;">年</div>
<div class="t" style="top:25.40px;height:17px;line-height:17px;font-size:12.4px;color:#acacac;left:422.30px;width:300px;text-align:center;">自</div>
<div class="t" style="top:26.60px;height:13px;line-height:13px;font-size:9.6px;color:#c0c0c0;left:17.60px;width:300px;text-align:center;transform:scaleY(1.1);">单</div>
<div class="t" style="top:29.00px;height:9px;line-height:9px;font-size:6.4px;color:#c8c8c8;font-weight:bold;left:545.00px;width:300px;text-align:center;">G</div>
<div class="t" style="top:27.00px;height:14px;line-height:14px;font-size:10.1px;color:#d0d0d0;letter-spacing:-0.044px;left:817.40px;">发现</div>
<div class="t" style="top:27.00px;height:14px;line-height:14px;font-size:10.1px;color:#d0d0d0;letter-spacing:-0.044px;left:865.60px;">板块</div>
<div class="t" style="top:27.00px;height:14px;line-height:14px;font-size:10.1px;color:#d0d0d0;letter-spacing:-0.044px;left:895.00px;">账户</div>
<div class="t" style="top:27.00px;height:14px;line-height:14px;font-size:10.1px;color:#d0d0d0;letter-spacing:-0.044px;left:925.00px;">资讯</div>
<div class="t" style="top:27.00px;height:14px;line-height:14px;font-size:10.1px;color:#d0d0d0;letter-spacing:-0.044px;left:954.80px;">个性化</div>
<div class="t" style="top:27.00px;height:14px;line-height:14px;font-size:10.1px;color:#d0d0d0;letter-spacing:-0.044px;left:994.50px;">系统工具</div>
<div class="t" style="top:27.00px;height:14px;line-height:14px;font-size:10.1px;color:#d0d0d0;letter-spacing:-0.044px;left:1045.00px;">帮助</div>
<div class="t" style="top:48.00px;height:14px;line-height:14px;font-size:10px;color:#b4b4b4;font-family:&quot;Liberation Serif&quot;,&quot;Noto Serif CJK SC&quot;,serif;letter-spacing:-0.315px;left:45.90px;"><span style="font-size:9.6px">WTI</span>原油主连<span style="font-size:9.6px">(NYMEX 6713)</span></div>
<div class="t" style="top:48.00px;height:14px;line-height:14px;font-size:10px;color:#b4b4b4;font-family:&quot;Liberation Serif&quot;,&quot;Noto Serif CJK SC&quot;,serif;letter-spacing:0.000px;left:172.70px;">季线</div>
<div class="t" style="top:62.20px;height:14px;line-height:14px;font-size:10px;color:#d6d600;letter-spacing:-0.139px;left:71.70px;">BOLL(26,26,2)</div>
<div class="t" style="top:62.20px;height:14px;line-height:14px;font-size:10px;color:#d8d8d8;letter-spacing:0.018px;left:152.70px;">MID 67.82</div>
<div class="t" style="top:62.20px;height:14px;line-height:14px;font-size:10px;color:#c4c400;letter-spacing:-0.196px;left:206.70px;">TOP 106.24</div>
<div class="t" style="top:62.20px;height:14px;line-height:14px;font-size:10px;color:#e000e0;letter-spacing:-0.176px;left:265.00px;">BOTTOM 29.39</div>
<div class="t" style="top:65.00px;height:12px;line-height:12px;font-size:8.5px;color:#a8a800;font-family:&quot;Liberation Mono&quot;,&quot;Noto Serif CJK SC&quot;,monospace;letter-spacing:-0.103px;left:841.50px;">Delay</div>
<div class="t" style="top:339.00px;height:14px;line-height:14px;font-size:10px;color:#d6d600;left:67.80px;">42季</div>
<div class="t" style="top:352.90px;height:14px;line-height:14px;font-size:10px;color:#d6d600;letter-spacing:-1.099px;left:71.70px;">CJL</div>
<div class="t" style="top:352.80px;height:14px;line-height:14px;font-size:10px;color:#c8c8c8;font-family:&quot;Liberation Serif&quot;,&quot;Noto Serif CJK SC&quot;,serif;letter-spacing:0.000px;left:103.50px;">成交量</div>
<div class="t" style="top:352.90px;height:14px;line-height:14px;font-size:10px;color:#d8d8d8;letter-spacing:-0.104px;left:137.50px;">7451550.00</div>
<div class="t" style="top:352.80px;height:14px;line-height:14px;font-size:10px;color:#c8c8c8;font-family:&quot;Liberation Serif&quot;,&quot;Noto Serif CJK SC&quot;,serif;letter-spacing:0.000px;left:197.00px;">持仓量</div>
<div class="t" style="top:352.90px;height:14px;line-height:14px;font-size:10px;color:#d8d8d8;letter-spacing:-0.109px;left:230.00px;">294467.00</div>
<div class="t" style="top:426.10px;height:14px;line-height:14px;font-size:10px;color:#d6d600;letter-spacing:-0.205px;left:71.70px;">MACD(12,26,9)</div>
<div class="t" style="top:426.10px;height:14px;line-height:14px;font-size:10px;color:#d8d8d8;letter-spacing:-0.163px;left:156.00px;">DIFF 3.03</div>
<div class="t" style="top:426.10px;height:14px;line-height:14px;font-size:10px;color:#c4c400;letter-spacing:-0.283px;left:207.00px;">DEA 4.10</div>
<div class="t" style="top:426.10px;height:14px;line-height:14px;font-size:10px;color:#d8d8d8;letter-spacing:-0.059px;left:258.00px;">-2.14</div>
<div class="t" style="top:144.42px;height:14px;line-height:14px;font-size:10px;color:#a6a6a6;font-weight:bold;letter-spacing:-0.199px;right:1015.00px;">100.00</div>
<div class="t" style="top:245.02px;height:14px;line-height:14px;font-size:10px;color:#a6a6a6;font-weight:bold;letter-spacing:-0.106px;right:1014.91px;">50.00</div>
<div class="t" style="top:450.02px;height:14px;line-height:14px;font-size:10px;color:#a6a6a6;font-weight:bold;letter-spacing:-0.106px;right:1014.91px;">10.00</div>
<div class="t" style="top:493.82px;height:14px;line-height:14px;font-size:10px;color:#a6a6a6;font-weight:bold;letter-spacing:0.033px;right:1014.77px;">0.00</div>
<div class="t" style="top:537.22px;height:14px;line-height:14px;font-size:10px;color:#a6a6a6;font-weight:bold;letter-spacing:0.173px;right:1014.63px;">-10.00</div>
<div class="t" style="top:359.50px;height:13px;line-height:13px;font-size:9.3px;color:#8c8c8c;letter-spacing:-0.397px;right:1015.20px;">4800万</div>
<div class="t" style="top:388.70px;height:13px;line-height:13px;font-size:9.3px;color:#8c8c8c;letter-spacing:-0.397px;right:1015.20px;">2400万</div>
<div class="t" style="top:76.40px;height:14px;line-height:14px;font-size:10px;color:#f03c3c;letter-spacing:-0.066px;left:451.97px;width:300px;text-align:center;">130.50</div>
<div class="t" style="top:184.20px;height:14px;line-height:14px;font-size:10px;color:#f03c3c;letter-spacing:-0.146px;left:215.93px;width:300px;text-align:center;">76.90</div>
<div class="t" style="top:301.20px;height:14px;line-height:14px;font-size:10px;color:#00c8d0;letter-spacing:-0.006px;left:16.50px;width:300px;text-align:center;">26.05</div>
<div class="t" style="top:340.20px;height:14px;line-height:14px;font-size:10px;color:#00c8d0;letter-spacing:-0.167px;left:324.42px;width:300px;text-align:center;">6.50</div>
<div class="t" style="top:573.20px;height:14px;line-height:14px;font-size:10px;color:#9a9a9a;letter-spacing:-0.022px;left:67.50px;">2015/03</div>
<div class="t" style="top:573.20px;height:14px;line-height:14px;font-size:10px;color:#9a9a9a;letter-spacing:-0.022px;left:212.00px;">2017/03</div>
<div class="t" style="top:573.20px;height:14px;line-height:14px;font-size:10px;color:#9a9a9a;letter-spacing:-0.022px;left:357.50px;">2019/03</div>
<div class="t" style="top:573.20px;height:14px;line-height:14px;font-size:10px;color:#9a9a9a;letter-spacing:-0.022px;left:502.50px;">2021/03</div>
<div class="t" style="top:573.20px;height:14px;line-height:14px;font-size:10px;color:#9a9a9a;letter-spacing:-0.022px;left:647.50px;">2023/03</div>
<div class="t" style="top:573.20px;height:14px;line-height:14px;font-size:10px;color:#9a9a9a;letter-spacing:-0.022px;left:792.50px;">2025/02</div>
<div class="t" style="top:76.60px;height:14px;line-height:14px;font-size:10px;color:#8a8a8a;left:-136.70px;width:300px;text-align:center;">分</div>
<div class="t" style="top:89.60px;height:14px;line-height:14px;font-size:10px;color:#8a8a8a;left:-136.70px;width:300px;text-align:center;">时</div>
<div class="t" style="top:103.20px;height:14px;line-height:14px;font-size:10px;color:#8a8a8a;left:-136.70px;width:300px;text-align:center;">图</div>
<div class="t" style="top:144.20px;height:14px;line-height:14px;font-size:10px;color:#e0e0e0;left:-136.70px;width:300px;text-align:center;">K</div>
<div class="t" style="top:157.80px;height:14px;line-height:14px;font-size:10px;color:#e0e0e0;left:-136.70px;width:300px;text-align:center;">线</div>
<div class="t" style="top:171.20px;height:14px;line-height:14px;font-size:10px;color:#e0e0e0;left:-136.70px;width:300px;text-align:center;">图</div>
<div class="t" style="top:211.50px;height:14px;line-height:14px;font-size:10px;color:#8a8a8a;left:-136.70px;width:300px;text-align:center;">资</div>
<div class="t" style="top:225.20px;height:14px;line-height:14px;font-size:10px;color:#8a8a8a;left:-136.70px;width:300px;text-align:center;">讯</div>
<div class="t" style="top:238.80px;height:14px;line-height:14px;font-size:10px;color:#8a8a8a;left:-136.70px;width:300px;text-align:center;">链</div>
<div class="t" style="top:298.00px;height:14px;line-height:14px;font-size:10px;color:#8a8a8a;left:-136.70px;width:300px;text-align:center;">资</div>
<div class="t" style="top:311.40px;height:14px;line-height:14px;font-size:10px;color:#8a8a8a;left:-136.70px;width:300px;text-align:center;">料</div>
<div class="t" style="top:48.60px;height:24px;line-height:24px;font-size:18px;color:#e2e200;letter-spacing:-0.567px;left:907.50px;">WTI</div>
<div class="t" style="top:48.60px;height:24px;line-height:24px;font-size:18px;color:#e2e200;letter-spacing:0.000px;left:938.80px;">原油主连</div>
<div class="t" style="top:48.60px;height:24px;line-height:24px;font-size:18px;color:#e2e200;letter-spacing:0.063px;left:1020.80px;">6713</div>
<div class="t" style="top:79.70px;height:16px;line-height:16px;font-size:11.6px;color:#e4e4e4;left:876.80px;">卖出</div>
<div class="t" style="top:73.60px;height:22px;line-height:22px;font-size:17.5px;color:#14e014;letter-spacing:-0.319px;left:925.30px;">71.58</div>
<div class="t" style="top:73.60px;height:22px;line-height:22px;font-size:17.5px;color:#e2e200;letter-spacing:-0.984px;left:1005.50px;">14</div>
<div class="t" style="top:103.20px;height:16px;line-height:16px;font-size:11.6px;color:#e4e4e4;left:876.80px;">买入</div>
<div class="t" style="top:98.00px;height:22px;line-height:22px;font-size:17.5px;color:#14e014;letter-spacing:-0.319px;left:925.30px;">71.57</div>
<div class="t" style="top:98.00px;height:22px;line-height:22px;font-size:17.5px;color:#e2e200;letter-spacing:-0.984px;left:1005.50px;">12</div>
<div class="t" style="top:122.60px;height:16px;line-height:16px;font-size:11.6px;color:#e4e4e4;left:876.80px;">最新</div>
<div class="t" style="top:122.50px;height:15px;line-height:15px;font-size:11px;color:#14e014;font-weight:bold;right:117.00px;">71.58</div>
<div class="t" style="top:122.60px;height:16px;line-height:16px;font-size:11.6px;color:#e4e4e4;left:971.60px;">涨跌</div>
<div class="t" style="top:122.50px;height:15px;line-height:15px;font-size:11px;color:#14e014;font-weight:bold;right:5.40px;">-1.58/2.16%</div>
<div class="t" style="top:141.30px;height:16px;line-height:16px;font-size:11.6px;color:#e4e4e4;left:876.80px;">现手</div>
<div class="t" style="top:141.20px;height:15px;line-height:15px;font-size:11px;color:#e2e200;font-weight:bold;right:117.00px;">1</div>
<div class="t" style="top:141.30px;height:16px;line-height:16px;font-size:11.6px;color:#e4e4e4;left:971.60px;">速涨</div>
<div class="t" style="top:141.20px;height:15px;line-height:15px;font-size:11px;color:#14e014;font-weight:bold;right:5.40px;">-0.07%</div>
<div class="t" style="top:159.70px;height:16px;line-height:16px;font-size:11.6px;color:#e4e4e4;left:876.80px;">总量</div>
<div class="t" style="top:159.60px;height:15px;line-height:15px;font-size:11px;color:#e2e200;font-weight:bold;right:117.00px;">80743</div>
<div class="t" style="top:159.70px;height:16px;line-height:16px;font-size:11.6px;color:#e4e4e4;left:971.60px;">开盘</div>
<div class="t" style="top:159.60px;height:15px;line-height:15px;font-size:11px;color:#14e014;font-weight:bold;right:5.40px;">72.35</div>
<div class="t" style="top:178.20px;height:16px;line-height:16px;font-size:11.6px;color:#e4e4e4;left:876.80px;">持仓</div>
<div class="t" style="top:178.10px;height:15px;line-height:15px;font-size:11px;color:#e2e200;font-weight:bold;right:117.00px;">294467</div>
<div class="t" style="top:178.20px;height:16px;line-height:16px;font-size:11.6px;color:#e4e4e4;left:971.60px;">最高</div>
<div class="t" style="top:178.10px;height:15px;line-height:15px;font-size:11px;color:#14e014;font-weight:bold;right:5.40px;">72.48</div>
<div class="t" style="top:196.80px;height:16px;line-height:16px;font-size:11.6px;color:#e4e4e4;left:876.80px;">日增</div>
<div class="t" style="top:196.70px;height:15px;line-height:15px;font-size:11px;color:#e2e200;font-weight:bold;right:117.00px;">-12127</div>
<div class="t" style="top:196.80px;height:16px;line-height:16px;font-size:11.6px;color:#e4e4e4;left:971.60px;">最低</div>
<div class="t" style="top:196.70px;height:15px;line-height:15px;font-size:11px;color:#14e014;font-weight:bold;right:5.40px;">71.50</div>
<div class="t" style="top:215.40px;height:16px;line-height:16px;font-size:11.6px;color:#e4e4e4;left:876.80px;">外盘</div>
<div class="t" style="top:215.30px;height:15px;line-height:15px;font-size:11px;color:#e2e200;font-weight:bold;right:117.00px;">37975</div>
<div class="t" style="top:215.40px;height:16px;line-height:16px;font-size:11.6px;color:#e4e4e4;left:971.60px;">结算价</div>
<div class="t" style="top:215.30px;height:15px;line-height:15px;font-size:11px;color:#e4e4e4;font-weight:bold;right:5.40px;">0.00</div>
<div class="t" style="top:233.90px;height:16px;line-height:16px;font-size:11.6px;color:#e4e4e4;left:876.80px;">比例</div>
<div class="t" style="top:233.80px;height:15px;line-height:15px;font-size:11px;color:#e2e200;font-weight:bold;right:117.00px;">47.0%</div>
<div class="t" style="top:233.90px;height:16px;line-height:16px;font-size:11.6px;color:#e4e4e4;left:971.60px;">昨收</div>
<div class="t" style="top:233.80px;height:15px;line-height:15px;font-size:11px;color:#e4e4e4;font-weight:bold;right:5.40px;">72.33</div>
<div class="t" style="top:252.40px;height:16px;line-height:16px;font-size:11.6px;color:#e4e4e4;left:876.80px;">内盘</div>
<div class="t" style="top:252.30px;height:15px;line-height:15px;font-size:11px;color:#e2e200;font-weight:bold;right:117.00px;">42768</div>
<div class="t" style="top:252.40px;height:16px;line-height:16px;font-size:11.6px;color:#e4e4e4;left:971.60px;">昨结</div>
<div class="t" style="top:252.30px;height:15px;line-height:15px;font-size:11px;color:#e4e4e4;font-weight:bold;right:5.40px;">73.16</div>
<div class="t" style="top:270.90px;height:16px;line-height:16px;font-size:11.6px;color:#e4e4e4;left:876.80px;">比例</div>
<div class="t" style="top:270.80px;height:15px;line-height:15px;font-size:11px;color:#e2e200;font-weight:bold;right:117.00px;">53.0%</div>
<div class="t" style="top:270.90px;height:16px;line-height:16px;font-size:11.6px;color:#e4e4e4;left:971.60px;">涨停</div>
<div class="t" style="top:270.80px;height:15px;line-height:15px;font-size:11px;color:#f03838;font-weight:bold;right:5.40px;">0.00</div>
<div class="t" style="top:289.40px;height:16px;line-height:16px;font-size:11.6px;color:#e4e4e4;left:876.80px;">杠杆</div>
<div class="t" style="top:289.30px;height:15px;line-height:15px;font-size:11px;color:#e2e200;font-weight:bold;right:117.00px;">-----</div>
<div class="t" style="top:289.40px;height:16px;line-height:16px;font-size:11.6px;color:#e4e4e4;left:971.60px;">跌停</div>
<div class="t" style="top:289.30px;height:15px;line-height:15px;font-size:11px;color:#14e014;font-weight:bold;right:5.40px;">0.00</div>
<div class="t" style="top:311.60px;height:16px;line-height:16px;font-size:11.6px;color:#e4e4e4;left:876.80px;">单位</div>
<div class="t" style="top:311.60px;height:16px;line-height:16px;font-size:11.6px;color:#e4e4e4;letter-spacing:0.759px;left:934.30px;">元/桶</div>
<div class="t" style="top:311.60px;height:16px;line-height:16px;font-size:11.6px;color:#e4e4e4;letter-spacing:0.596px;left:1034.00px;">美元/桶</div>
<div class="t" style="top:331.20px;height:16px;line-height:16px;font-size:11.6px;color:#909090;left:880.00px;">时间</div>
<div class="t" style="top:331.20px;height:16px;line-height:16px;font-size:11.6px;color:#909090;right:94.80px;">价位</div>
<div class="t" style="top:331.20px;height:16px;line-height:16px;font-size:11.6px;color:#909090;right:14.40px;">大单</div>
<div class="t" style="top:346.80px;height:15px;line-height:15px;font-size:11px;color:#aaaaaa;font-weight:bold;letter-spacing:0.244px;left:880.00px;">20:25:37</div>
<div class="t" style="top:346.80px;height:15px;line-height:15px;font-size:11px;color:#14e014;font-weight:bold;right:94.80px;">71.59</div>
<div class="t" style="top:346.80px;height:15px;line-height:15px;font-size:11px;color:#f03838;font-weight:bold;right:14.40px;">7</div>
<div class="t" style="top:366.90px;height:15px;line-height:15px;font-size:11px;color:#aaaaaa;font-weight:bold;letter-spacing:0.244px;left:880.00px;">20:25:37</div>
<div class="t" style="top:366.90px;height:15px;line-height:15px;font-size:11px;color:#14e014;font-weight:bold;right:94.80px;">71.58</div>
<div class="t" style="top:366.90px;height:15px;line-height:15px;font-size:11px;color:#14e014;font-weight:bold;right:14.40px;">5</div>
<div class="t" style="top:387.10px;height:15px;line-height:15px;font-size:11px;color:#aaaaaa;font-weight:bold;letter-spacing:0.244px;left:880.00px;">20:25:42</div>
<div class="t" style="top:387.10px;height:15px;line-height:15px;font-size:11px;color:#14e014;font-weight:bold;right:94.80px;">71.58</div>
<div class="t" style="top:387.10px;height:15px;line-height:15px;font-size:11px;color:#f03838;font-weight:bold;right:14.40px;">7</div>
<div class="t" style="top:425.00px;height:16px;line-height:16px;font-size:11.6px;color:#909090;left:880.00px;">时间</div>
<div class="t" style="top:425.00px;height:16px;line-height:16px;font-size:11.6px;color:#909090;right:94.80px;">价位</div>
<div class="t" style="top:425.00px;height:16px;line-height:16px;font-size:11.6px;color:#909090;right:14.40px;">现手</div>
<div class="t" style="top:441.40px;height:15px;line-height:15px;font-size:11px;color:#aaaaaa;font-weight:bold;letter-spacing:0.244px;left:880.00px;">20:25:42</div>
<div class="t" style="top:441.40px;height:15px;line-height:15px;font-size:11px;color:#14e014;font-weight:bold;right:94.80px;">71.58</div>
<div class="t" style="top:441.40px;height:15px;line-height:15px;font-size:11px;color:#f03838;font-weight:bold;right:14.40px;">1</div>
<div class="t" style="top:461.70px;height:15px;line-height:15px;font-size:11px;color:#aaaaaa;font-weight:bold;letter-spacing:0.244px;left:880.00px;">20:25:42</div>
<div class="t" style="top:461.70px;height:15px;line-height:15px;font-size:11px;color:#14e014;font-weight:bold;right:94.80px;">71.58</div>
<div class="t" style="top:461.70px;height:15px;line-height:15px;font-size:11px;color:#f03838;font-weight:bold;right:14.40px;">7</div>
<div class="t" style="top:482.00px;height:15px;line-height:15px;font-size:11px;color:#aaaaaa;font-weight:bold;letter-spacing:0.244px;left:880.00px;">20:25:42</div>
<div class="t" style="top:482.00px;height:15px;line-height:15px;font-size:11px;color:#14e014;font-weight:bold;right:94.80px;">71.58</div>
<div class="t" style="top:482.00px;height:15px;line-height:15px;font-size:11px;color:#f03838;font-weight:bold;right:14.40px;">4</div>
<div class="t" style="top:502.30px;height:15px;line-height:15px;font-size:11px;color:#aaaaaa;font-weight:bold;letter-spacing:0.244px;left:880.00px;">20:25:42</div>
<div class="t" style="top:502.30px;height:15px;line-height:15px;font-size:11px;color:#14e014;font-weight:bold;right:94.80px;">71.58</div>
<div class="t" style="top:502.30px;height:15px;line-height:15px;font-size:11px;color:#f03838;font-weight:bold;right:14.40px;">3</div>
<div class="t" style="top:522.60px;height:15px;line-height:15px;font-size:11px;color:#aaaaaa;font-weight:bold;letter-spacing:0.244px;left:880.00px;">20:25:42</div>
<div class="t" style="top:522.60px;height:15px;line-height:15px;font-size:11px;color:#14e014;font-weight:bold;right:94.80px;">71.58</div>
<div class="t" style="top:522.60px;height:15px;line-height:15px;font-size:11px;color:#f03838;font-weight:bold;right:14.40px;">1</div>
<div class="t" style="top:542.80px;height:15px;line-height:15px;font-size:11px;color:#aaaaaa;font-weight:bold;letter-spacing:0.244px;left:880.00px;">20:25:43</div>
<div class="t" style="top:542.80px;height:15px;line-height:15px;font-size:11px;color:#14e014;font-weight:bold;right:94.80px;">71.58</div>
<div class="t" style="top:542.80px;height:15px;line-height:15px;font-size:11px;color:#f03838;font-weight:bold;right:14.40px;">1</div>
<div class="t" style="top:572.40px;height:13px;line-height:13px;font-size:9.6px;color:#808080;font-family:&quot;Liberation Serif&quot;,&quot;Noto Serif CJK SC&quot;,serif;left:755.60px;width:300px;text-align:center;">明细</div>
<div class="t" style="top:572.40px;height:13px;line-height:13px;font-size:9.6px;color:#808080;font-family:&quot;Liberation Serif&quot;,&quot;Noto Serif CJK SC&quot;,serif;left:794.80px;width:300px;text-align:center;">分价</div>
<div class="t" style="top:572.40px;height:13px;line-height:13px;font-size:9.6px;color:#808080;font-family:&quot;Liberation Serif&quot;,&quot;Noto Serif CJK SC&quot;,serif;left:833.30px;width:300px;text-align:center;">分笔</div>
<div class="t" style="top:572.40px;height:13px;line-height:13px;font-size:9.6px;color:#808080;font-family:&quot;Liberation Serif&quot;,&quot;Noto Serif CJK SC&quot;,serif;left:871.70px;width:300px;text-align:center;">统计</div>
<div class="t" style="top:593.00px;height:14px;line-height:14px;font-size:10.3px;color:#ee7a1c;letter-spacing:-0.031px;left:29.00px;">纽约NYMEX</div>
<div class="t" style="top:593.00px;height:14px;line-height:14px;font-size:10.3px;color:#d4d4d4;letter-spacing:-0.337px;left:96.50px;">纽约COMEX</div>
<div class="t" style="top:593.00px;height:14px;line-height:14px;font-size:10.3px;color:#d4d4d4;letter-spacing:-0.429px;left:163.50px;">芝加哥CBOT</div>
<div class="t" style="top:593.00px;height:14px;line-height:14px;font-size:10.3px;color:#d4d4d4;letter-spacing:-0.380px;left:231.00px;">芝加哥CME</div>
<div class="t" style="top:593.00px;height:14px;line-height:14px;font-size:10.3px;color:#d4d4d4;letter-spacing:-0.511px;left:293.50px;">芝加哥CBOE</div>
<div class="t" style="top:593.00px;height:14px;line-height:14px;font-size:10.3px;color:#d4d4d4;letter-spacing:-0.553px;left:361.00px;">美国ICE</div>
<div class="t" style="top:593.00px;height:14px;line-height:14px;font-size:10.3px;color:#d4d4d4;letter-spacing:-0.553px;left:406.50px;">欧洲ICE</div>
<div class="t" style="top:593.00px;height:14px;line-height:14px;font-size:10.3px;color:#d4d4d4;letter-spacing:-0.672px;left:452.50px;">欧交所EUREX</div>
<div class="t" style="top:593.00px;height:14px;line-height:14px;font-size:10.3px;color:#d4d4d4;letter-spacing:-0.353px;left:524.00px;">伦敦LME</div>
<div class="t" style="top:593.00px;height:14px;line-height:14px;font-size:10.3px;color:#d4d4d4;letter-spacing:-0.440px;left:575.00px;">香港HKEX</div>
<div class="t" style="top:593.00px;height:14px;line-height:14px;font-size:10.3px;color:#d4d4d4;letter-spacing:-0.440px;left:631.50px;">新加坡SGX</div>
<div class="t" style="top:593.00px;height:14px;line-height:14px;font-size:10.3px;color:#d4d4d4;letter-spacing:-0.697px;left:692.50px;">日本JPX</div>
<div class="t" style="top:593.00px;height:14px;line-height:14px;font-size:10.3px;color:#d4d4d4;letter-spacing:-0.083px;left:739.00px;">马来西亚BMD</div>
<div class="t" style="top:593.00px;height:14px;line-height:14px;font-size:10.3px;color:#d4d4d4;letter-spacing:-0.297px;left:813.50px;">外盘主力合约</div>
<div class="t" style="top:593.00px;height:14px;line-height:14px;font-size:10.3px;color:#d4d4d4;letter-spacing:-0.297px;left:884.00px;">外盘加权</div>
<div class="t" style="top:592.30px;height:15px;line-height:15px;font-size:11px;color:#ee7a1c;letter-spacing:0.000px;left:1026.00px;">在线客服</div>
<div class="t" style="top:616.20px;height:14px;line-height:14px;font-size:10px;color:#36b436;font-family:&quot;Liberation Serif&quot;,&quot;Noto Serif CJK SC&quot;,serif;letter-spacing:0.000px;left:33.00px;">上证指数</div>
<div class="t" style="top:616.70px;height:13px;line-height:13px;font-size:9.6px;color:#36b436;font-family:&quot;Liberation Mono&quot;,&quot;Noto Serif CJK SC&quot;,monospace;letter-spacing:-0.296px;left:78.00px;">3250.60 -2.03</div>
<div class="t" style="top:616.20px;height:14px;line-height:14px;font-size:10px;color:#d8d8d8;font-family:&quot;Liberation Serif&quot;,&quot;Noto Serif CJK SC&quot;,serif;letter-spacing:0.000px;left:184.00px;">文华商品</div>
<div class="t" style="top:616.70px;height:13px;line-height:13px;font-size:9.6px;color:#d8d8d8;font-weight:bold;font-family:&quot;Liberation Mono&quot;,&quot;Noto Serif CJK SC&quot;,monospace;letter-spacing:-0.203px;left:229.00px;">0.00 0.00</div>
<div class="t" style="top:616.20px;height:14px;line-height:14px;font-size:10.2px;color:#d8d8d8;letter-spacing:0.136px;left:1004.00px;">20:40:47 - wh</div>
</div>
</body></html>
